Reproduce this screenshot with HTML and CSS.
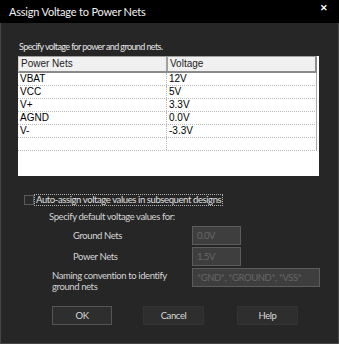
FILE: index.html
```html
<!DOCTYPE html>
<html>
<head>
<meta charset="utf-8">
<link rel="stylesheet" href="styles.css">
</head>
<body>
<div class="window">
  <div class="titlebar">
    <span class="title">Assign Voltage to Power Nets</span>
    <span class="close">&#x2715;</span>
  </div>
  <div class="content">
    <div class="intro">Specify voltage for power and ground nets.</div>
    <div class="table">
      <div class="thead">
        <div class="th c1">Power Nets</div>
        <div class="th c2">Voltage</div>
      </div>
      <div class="row"><div class="td c1">VBAT</div><div class="td c2">12V</div></div>
      <div class="row"><div class="td c1">VCC</div><div class="td c2">5V</div></div>
      <div class="row"><div class="td c1">V+</div><div class="td c2">3.3V</div></div>
      <div class="row"><div class="td c1">AGND</div><div class="td c2">0.0V</div></div>
      <div class="row"><div class="td c1">V-</div><div class="td c2">-3.3V</div></div>
      <div class="row"><div class="td c1"></div><div class="td c2"></div></div>
    </div>
    <div class="check-row">
      <span class="checkbox"></span>
      <span class="check-label">Auto-assign voltage values in subsequent designs</span>
    </div>
    <div class="sub">Specify default voltage values for:</div>
    <div class="field first">
      <span class="flabel">Ground Nets</span>
      <span class="input short">0.0V</span>
    </div>
    <div class="field">
      <span class="flabel">Power Nets</span>
      <span class="input short">1.5V</span>
    </div>
    <div class="field naming">
      <span class="flabel wide">Naming convention to identify<br>ground nets</span>
      <span class="input long">*GND*, *GROUND*, *VSS*</span>
    </div>
    <div class="buttons">
      <span class="btn default">OK</span>
      <span class="btn">Cancel</span>
      <span class="btn">Help</span>
    </div>
  </div>
</div>
</body>
</html>
```
FILE: styles.css
```css
* { box-sizing: border-box; }
html, body { margin: 0; padding: 0; background: #262626; }
body { width: 339px; height: 344px; overflow: hidden; font-family: Lato, "Noto Sans", sans-serif; font-size: 9.5px; letter-spacing: -0.4px; color: #d4d4d4; }
.window { width: 339px; height: 344px; display: flex; flex-direction: column; border: 1px solid #464646; border-top: none; background: #262626; }
.titlebar { height: 23px; background: #000; display: flex; align-items: center; justify-content: space-between; padding: 0 8px 0 9px; margin: 0 -1px; }
.title { color: #f2f2f2; font-size: 11px; letter-spacing: -0.2px; }
.close { color: #fff; font-size: 9px; font-weight: bold; margin-top: -8px; margin-right: 3px; letter-spacing: 0; }
.content { padding: 17px 0 0 17px; display: flex; flex-direction: column; }
.intro { height: 15px; line-height: 14px; color: #e6e6e6; padding-left: 1px; font-size: 9px; letter-spacing: -0.6px; }
.table { margin-top: 1px; width: 301px; height: 120px; background: #fff; padding-right: 2px; font-family: "Liberation Sans", Arial, sans-serif; font-size: 10px; letter-spacing: 0; color: #000; }
.thead { display: flex; height: 17px; background: #f0f0f0; border-top: 1px solid #a0a0a0; border-bottom: 2px solid #8a8a8a; border-left: 1px solid #d0d0d0; }
.th { line-height: 14px; padding-left: 2px; color: #222; }
.th.c1 { width: 149px; border-right: 2px solid #a0a0a0; }
.th.c2 { flex: 1; border-right: 2px solid #8a8a8a; }
.row { display: flex; height: 13px; border-bottom: 1px dotted #b8b8b8; border-right: 1px solid #a8a8a8; }
.td { line-height: 12px; padding-left: 2px; }
.td.c1 { width: 149px; border-right: 1px dotted #b8b8b8; }
.td.c2 { flex: 1; }
.check-row { margin-top: 18px; margin-left: 6px; display: flex; align-items: center; height: 12px; }
.checkbox { width: 10px; height: 10px; border: 1px solid #5a5a5a; background: #2a2a2a; }
.check-label { border: 1px dotted #b0b0b0; line-height: 10px; padding: 0 1px; color: #e0e0e0; }
.sub { margin-top: 4px; margin-left: 31px; line-height: 14px; height: 14px; color: #d4d4d4; }
.field { display: flex; align-items: center; margin-top: 2px; height: 19px; }
.field.first { margin-top: 2px; }
.flabel { width: 174px; padding-left: 55px; color: #d4d4d4; white-space: nowrap; }
.flabel.wide { padding-left: 34px; line-height: 10.5px; align-self: flex-start; padding-top: 3px; }
.input { height: 19px; background: #3e3e3e; border: 1px solid #5c5c5c; color: #666; padding-left: 4px; line-height: 17px; white-space: nowrap; }
.input.short { width: 49px; }
.input.long { width: 128px; }
.buttons { display: flex; margin-top: 19px; margin-left: 34px; }
.btn { width: 61px; height: 19px; background: #2e2e2e; border: 1px solid #333; color: #d8d8d8; text-align: center; line-height: 17px; margin-right: 33px; }
.btn.default { width: 60px; border-color: #555; margin-right: 31px; }
```
